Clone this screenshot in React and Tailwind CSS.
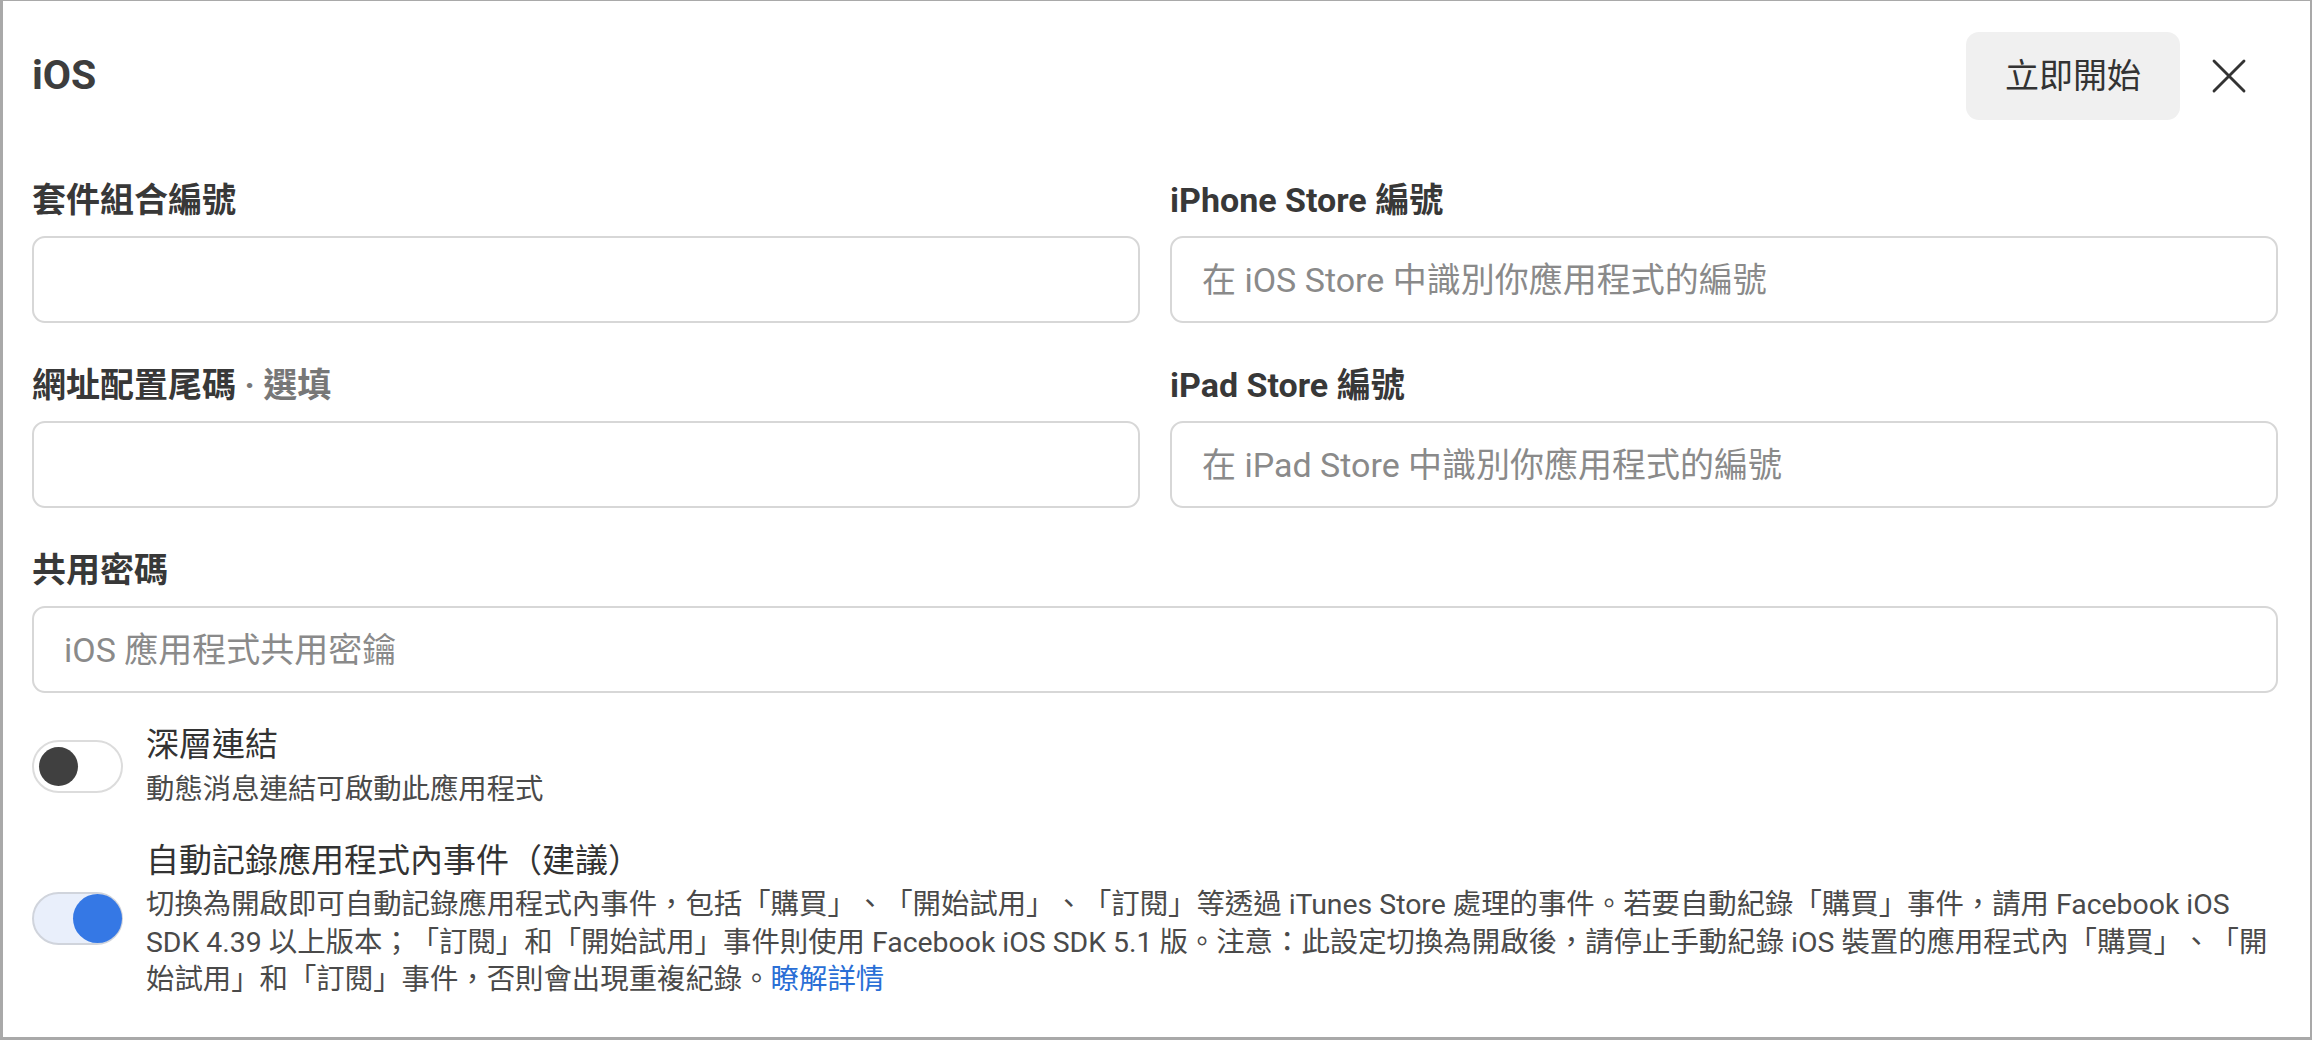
import { useState } from 'react';

const font = { fontFamily: 'Roboto, "Noto Sans CJK TC", sans-serif' };

const Field = ({ label, optional, placeholder, full }) => (
  <div className={full ? 'col-span-2' : ''}>
    <div className="text-[34px] leading-[40px] font-bold text-[#383838] mb-[16px]">
      {label}
      {optional && <span className="text-[#777]"> · {optional}</span>}
    </div>
    <input
      type="text"
      placeholder={placeholder}
      className="w-full h-[87px] px-[30px] border-2 border-[#d7d7d7] rounded-[13px] text-[34px] text-[#333] placeholder:text-[#8a8a8a] outline-none"
    />
  </div>
);

const Toggle = ({ on, onChange }) => (
  <button
    onClick={onChange}
    className={`relative shrink-0 w-[91px] h-[53px] rounded-full border-2 ${
      on ? 'bg-[#e9effb] border-[#d0d4dc]' : 'bg-white border-[#dcdcdc]'
    }`}
  >
    {on ? (
      <span className="absolute right-[-1px] top-[0px] w-[49px] h-[49px] rounded-full bg-[#3578e5]" />
    ) : (
      <span className="absolute left-[5px] top-[5px] w-[39px] h-[39px] rounded-full bg-[#404040]" />
    )}
  </button>
);

export default function App() {
  const [deepLink, setDeepLink] = useState(false);
  const [autoLog, setAutoLog] = useState(true);

  return (
    <div
      style={font}
      className="w-[2312px] h-[1040px] bg-white border-l-[3px] border-t border-r-2 border-b-[3px] border-[#a9a9a9] pl-[29px] pr-[32px] pt-[31px] [text-spacing-trim:space-all]"
    >
      {/* Header */}
      <div className="flex items-center justify-between h-[88px]">
        <h1 className="text-[41px] font-bold text-[#3d3d3d]">iOS</h1>
        <div className="flex items-center">
          <button className="h-[88px] px-[39px] rounded-[13px] bg-[#f0f0f0] text-[34px] text-[#333]">
            立即開始
          </button>
          <button className="ml-[13px] mr-[13px] w-[72px] h-[72px] flex items-center justify-center">
            <svg width="40" height="40" viewBox="0 0 24 24" fill="none" stroke="#333" strokeWidth="1.7" strokeLinecap="round">
              <path d="M3 3L21 21M21 3L3 21" />
            </svg>
          </button>
        </div>
      </div>

      {/* Fields */}
      <div className="grid grid-cols-2 gap-x-[30px] gap-y-[42px] mt-[60px]">
        <Field label="套件組合編號" />
        <Field label="iPhone Store 編號" placeholder="在 iOS Store 中識別你應用程式的編號" />
        <Field label="網址配置尾碼" optional="選填" />
        <Field label="iPad Store 編號" placeholder="在 iPad Store 中識別你應用程式的編號" />
        <Field label="共用密碼" placeholder="iOS 應用程式共用密鑰" full />
      </div>

      {/* Toggles */}
      <div className="mt-[30px] flex items-center gap-[23px]">
        <Toggle on={deepLink} onChange={() => setDeepLink(!deepLink)} />
        <div>
          <div className="text-[33px] leading-[44px] text-[#333]">深層連結</div>
          <div className="text-[28.4px] leading-[40px] mt-[3px] text-[#4a4a4a]">動態消息連結可啟動此應用程式</div>
        </div>
      </div>

      <div className="mt-[29px] flex items-center gap-[23px]">
        <Toggle on={autoLog} onChange={() => setAutoLog(!autoLog)} />
        <div>
          <div className="text-[33px] leading-[44px] text-[#333]">自動記錄應用程式內事件（建議）</div>
          <div className="text-[28.4px] leading-[37.5px] mt-[3px] text-[#4a4a4a] whitespace-nowrap">
            <div>切換為開啟即可自動記錄應用程式內事件，包括「購買」、「開始試用」、「訂閱」等透過 iTunes Store 處理的事件。若要自動紀錄「購買」事件，請用 Facebook iOS</div>
            <div>SDK 4.39 以上版本；「訂閱」和「開始試用」事件則使用 Facebook iOS SDK 5.1 版。注意：此設定切換為開啟後，請停止手動紀錄 iOS 裝置的應用程式內「購買」、「開</div>
            <div>
              始試用」和「訂閱」事件，否則會出現重複紀錄。
              <a href="#" className="text-[#2a6fd6]">瞭解詳情</a>
            </div>
          </div>
        </div>
      </div>
    </div>
  );
}
